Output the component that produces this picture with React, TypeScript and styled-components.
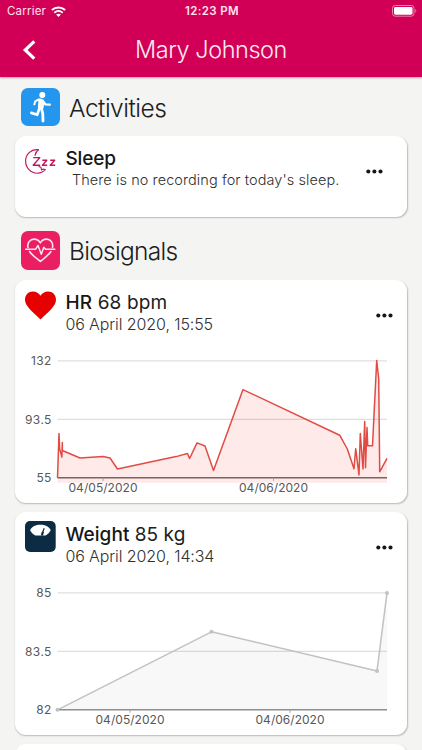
import React from "react";
import styled, { createGlobalStyle } from "styled-components";

const GlobalStyle = createGlobalStyle`
  * { box-sizing: border-box; }
  html, body { margin: 0; padding: 0; background: #f4f4f3; }
  body { font-family: Inter, "Liberation Sans", sans-serif; color: #202020; overflow: hidden; }
  svg { display: block; }
`;

const Screen = styled.div`
  display: flex;
  flex-direction: column;
  height: 750px;
  overflow: hidden;
  background: #f4f4f3;
`;

const Header = styled.header`
  display: flex;
  flex-direction: column;
  flex: none;
  height: 77px;
  background: #d10056;
  color: #fff;
  box-shadow: 0 1px 2px rgba(120, 60, 80, 0.45);
  z-index: 1;
`;

const StatusBar = styled.div`
  display: grid;
  grid-template-columns: 1fr auto 1fr;
  align-items: center;
  height: 22px;
  padding: 0 5px 0 7px;
  font-size: 11.5px;
  line-height: 22px;
  color: #ffe3ef;
`;

const Carrier = styled.div`
  display: flex;
  align-items: center;
  gap: 5px;
  letter-spacing: 0.2px;
`;

const Clock = styled.div`
  font-size: 11.5px;
  font-weight: 600;
  letter-spacing: 0.35px;
`;

const BatterySlot = styled.div`
  display: flex;
  justify-content: flex-end;
`;

const NavBar = styled.div`
  display: grid;
  grid-template-columns: 59px 1fr 59px;
  align-items: center;
  height: 55px;
`;

const BackButton = styled.button`
  display: flex;
  justify-content: center;
  padding: 0 2px 0 0;
  border: 0;
  background: none;
  color: #fff;
`;

const Title = styled.h1`
  margin: 0;
  text-align: center;
  font-size: 23.5px;
  font-weight: 300;
  line-height: 32px;
  letter-spacing: -0.45px;
  white-space: nowrap;
  color: #ffe9f2;
`;

const Content = styled.main`
  display: flex;
  flex-direction: column;
  padding: 1px 15px 0;
`;

const SectionHead = styled.div<{ $height: number }>`
  display: flex;
  align-items: center;
  gap: 9.5px;
  height: ${(p) => p.$height}px;
  padding-left: 6px;
`;

const SectionTile = styled.div<{ $color: string }>`
  display: flex;
  align-items: center;
  justify-content: center;
  width: 38.5px;
  height: 38.5px;
  border-radius: 7px;
  background: ${(p) => p.$color};
`;

const SectionTitle = styled.h2<{ $spacing: number }>`
  margin: 0;
  padding-top: 1px;
  font-size: 24.5px;
  font-weight: 300;
  line-height: 34px;
  letter-spacing: ${(p) => p.$spacing}px;
`;

const Card = styled.section<{ $height: number; $gap: number }>`
  display: flex;
  flex-direction: column;
  flex: none;
  height: ${(p) => p.$height}px;
  margin-bottom: ${(p) => p.$gap}px;
  border-radius: 11px;
  background: #fff;
  box-shadow: 0.5px 1px 1.5px rgba(0, 0, 0, 0.24);
`;

const CardHead = styled.div`
  display: flex;
  flex: none;
  height: 56px;
  padding-left: 9.6px;
`;

const IconSlot = styled.div<{ $top: number }>`
  flex: none;
  width: 40.8px;
  padding-top: ${(p) => p.$top}px;
`;

const Heading = styled.div`
  flex: 1;
  padding-top: 10px;
  white-space: nowrap;
`;

const Name = styled.div<{ $spacing: number }>`
  font-size: 19px;
  line-height: 25px;
  letter-spacing: ${(p) => p.$spacing}px;
`;

const Strong = styled.span`
  font-weight: 500;
  color: #161616;
`;

const Stamp = styled.div`
  font-size: 16px;
  font-weight: 300;
  line-height: 18px;
  letter-spacing: -0.1px;
  color: #303030;
`;

const Message = styled.div`
  padding-left: 6.5px;
  font-size: 14.5px;
  font-weight: 300;
  line-height: 18px;
  letter-spacing: 0.08px;
  color: #303030;
`;

const MoreButton = styled.button<{ $right: number }>`
  display: flex;
  align-items: center;
  align-self: flex-start;
  height: 70px;
  padding: 0;
  margin-right: ${(p) => p.$right}px;
  border: 0;
  background: none;
`;

const AxisText = styled.text`
  font-size: 12px;
  fill: #585858;
`;

const More = ({ right }: { right: number }) => (
  <MoreButton $right={right} aria-label="More">
    <svg width="17" height="5" viewBox="0 0 17 5" fill="#161616">
      <circle cx="2.3" cy="2.5" r="2.05" />
      <circle cx="8.4" cy="2.5" r="2.05" />
      <circle cx="14.5" cy="2.5" r="2.05" />
    </svg>
  </MoreButton>
);

const WifiIcon = () => (
  <svg width="15" height="11" viewBox="0 0 15 11" fill="none" stroke="#fff">
    <path d="M.9 4.1C4.7.6 10.3.6 14.1 4.1" strokeWidth="2" />
    <path d="M3.3 6.7C5.8 4.5 9.2 4.5 11.7 6.7" strokeWidth="1.8" />
    <path d="M7.5 11 5.1 8.6Q7.5 6.7 9.9 8.6Z" fill="#fff" stroke="none" />
  </svg>
);

const BatteryIcon = () => (
  <svg width="25" height="12" viewBox="0 0 25 12">
    <rect x=".5" y=".5" width="21.5" height="10.7" rx="2.7" fill="none" stroke="#ec83ad" />
    <rect x="2" y="2" width="18.5" height="7.7" rx="1.4" fill="#fff" />
    <path d="M23.3 4v3.7c1.3-.6 1.3-3.1 0-3.7z" fill="#ec83ad" />
  </svg>
);

const RunnerIcon = () => (
  <svg width="38.5" height="38.5" viewBox="0 0 38.5 38.5" fill="none" stroke="#fff" strokeLinecap="round" strokeLinejoin="round">
    <circle cx="21.3" cy="7" r="3" fill="#fff" stroke="none" />
    <path d="M16.6 11.4Q19 10.2 21.2 11.5Q23 13 22.5 15.5L22 20.5L17.4 20L17.9 14Z" fill="#fff" strokeWidth="1" />
    <path d="M17.4 11.6L14.2 13.4L13.3 16.4" strokeWidth="1.9" />
    <path d="M21.8 12.6L24.3 16.3L28.8 16.6" strokeWidth="2.3" />
    <path d="M18.6 20L16.2 26.8L10.4 24.9" strokeWidth="2.7" />
    <path d="M20.4 20.5L21.8 25.5L22 33" strokeWidth="2.8" />
  </svg>
);

const PulseIcon = () => (
  <svg width="38.5" height="38.5" viewBox="0 0 38.5 38.5" fill="none" stroke="#ffe3ee" strokeWidth="1.6" strokeLinecap="round" strokeLinejoin="round">
    <path d="M7 16.5C6 11.4 9.2 8.1 13 8.1C16 8.1 18 9.7 19.3 11.8C20.6 9.7 22.6 8.1 25.6 8.1C29.4 8.1 32.5 11.4 31.5 16.5M8.6 20.5C11.3 24.7 16 27.6 19.3 30.4C22.6 27.6 27.2 24.7 29.9 20.5" />
    <path d="M4.7 18.3H14.5L17 14.5L20.3 23.2L22.8 16.2L24.5 18.3H33.8" strokeWidth="1.5" />
  </svg>
);

const SleepIcon = () => (
  <svg width="32" height="26" viewBox="0 0 32 26" fill="none" stroke="#c3145b" strokeWidth="1.15" strokeLinejoin="round" strokeLinecap="round">
    <path d="M13.5.8C5.8-.3.6 5.5.6 12C.6 18.8 5.8 24.2 12.4 24.2C15.8 24.2 18.4 22.8 20.4 20.7L18.2 20.1L16.5 21L16.1 18.6L14 17.6" />
    <path d="M13.5.8C11.4 2.2 10.3 4.2 10 6.3" />
    <path d="M8.2 8.6H14.8L8.2 16.2H15.2" strokeWidth="1.4" strokeLinecap="butt" />
    <path d="M17.4 11.2H21.8L17.4 16.2H22.2M25.2 11.2H29.7L25.2 16.2H30.2" strokeWidth="1.4" strokeLinecap="butt" />
  </svg>
);

const HeartIcon = () => (
  <svg width="31" height="29" viewBox="0 0 31 29">
    <path d="M15.5 28.6C12 24.8 7.3 21 4.2 17.5C1.4 14.3 0 11.8 0 8.6C0 3.9 3.4.4 8 .4C11.2.4 14 2 15.5 4.7C17 2 19.8.4 23 .4C27.6.4 31 3.9 31 8.6C31 11.8 29.6 14.3 26.8 17.5C23.7 21 19 24.8 15.5 28.6Z" fill="#e60000" />
  </svg>
);

const ScaleIcon = () => (
  <svg width="31" height="31" viewBox="0 0 31 31">
    <rect width="30.7" height="31" rx="5" fill="#0c2c44" />
    <path d="M5.1 9.2C7 5.5 10.7 3.8 15.4 3.8S23.8 5.5 25.7 9.2C24.3 11.8 22.6 13.2 20.6 14.5H10.2C8.2 13.2 6.5 11.8 5.1 9.2Z" fill="#fff" />
    <path d="M16.7 13.8L19.2 7.2" stroke="#0c2c44" strokeWidth="1.2" />
    <path d="M16 14.6L17 10.4L19 11L18 14.6Z" fill="#0c2c44" />
  </svg>
);

type Point = [number, number];
type ChartProps = {
  points: Point[];
  yLabels: [string, string, string];
  ticks: { x: number; label: string }[];
  stroke: string;
  fill: string;
  axis: string;
  bleed: number;
  dots?: boolean;
};

const LEFT = 42.5;
const RIGHT = 372;
const ROWS = [24.9, 83.4, 141.8];

const LineChart = ({ points, yLabels, ticks, stroke, fill, axis, bleed, dots }: ChartProps) => {
  const line = points.map((p) => p.join(",")).join(" ");
  const base = ROWS[2] + bleed;
  return (
    <svg width="392" height="167" viewBox="0 0 392 167">
      <polygon points={`${LEFT},${base} ${line} ${RIGHT},${base}`} fill={fill} />
      {ROWS.slice(0, 2).map((y) => (
        <line key={y} x1={LEFT} x2={RIGHT} y1={y} y2={y} stroke="#000" strokeOpacity="0.13" strokeWidth="1.2" />
      ))}
      <polyline points={line} fill="none" stroke={stroke} strokeWidth="1.5" strokeLinejoin="round" />
      <line x1={LEFT} x2={RIGHT} y1={ROWS[2]} y2={ROWS[2]} stroke={axis} strokeWidth="1.4" />
      {dots && points.map(([x, y]) => <circle key={x} cx={x} cy={y} r="2" fill={stroke} />)}
      {yLabels.map((label, i) => (
        <AxisText key={label} x="36.8" y={ROWS[i] + 4.3} textAnchor="end" letterSpacing="0.4">
          {label}
        </AxisText>
      ))}
      {ticks.map(({ x, label }) => (
        <React.Fragment key={label}>
          <line x1={x} x2={x} y1={ROWS[2]} y2={ROWS[2] + 3} stroke="#a0a0a0" strokeWidth="1" />
          <AxisText x={x - 34.5} y="156.3" textLength="69">
            {label}
          </AxisText>
        </React.Fragment>
      ))}
    </svg>
  );
};

const heartRate: Point[] = [
  [42.5, 141.8], [44, 97.5], [44.7, 113], [46.9, 121], [47.3, 106.5], [47.4, 114.5],
  [65, 122], [88, 120.6], [95, 122], [102.5, 133], [161, 120.6], [172.5, 117.5],
  [174.6, 122.5], [182, 106.9], [190, 110], [198.5, 134.5], [228, 53.6], [324.7, 99.2],
  [332.3, 113], [339, 132.8], [340.7, 112.7], [344, 139], [345.3, 97.5], [348, 133],
  [349.7, 85.4], [350.5, 131.7], [352, 91.5], [352.7, 109.7], [357.5, 109.7],
  [361.7, 24.6], [363.7, 42.5], [364.7, 135.8], [372, 122.4],
];

const weight: Point[] = [[42.5, 141.8], [196.5, 63.8], [362, 102.9], [372, 24.9]];

export default function App() {
  return (
    <>
      <GlobalStyle />
      <Screen>
        <Header>
          <StatusBar>
            <Carrier>Carrier <WifiIcon /></Carrier>
            <Clock>12:23 PM</Clock>
            <BatterySlot><BatteryIcon /></BatterySlot>
          </StatusBar>
          <NavBar>
            <BackButton aria-label="Back">
              <svg width="14" height="20" viewBox="0 0 14 20" fill="none" stroke="#fff" strokeWidth="3.2">
                <path d="M12.3 1.3L3.2 10L12.3 18.7" />
              </svg>
            </BackButton>
            <Title>Mary Johnson</Title>
          </NavBar>
        </Header>
        <Content>
          <SectionHead $height={58}>
            <SectionTile $color="#2496ee"><RunnerIcon /></SectionTile>
            <SectionTitle $spacing={-0.5}>Activities</SectionTitle>
          </SectionHead>
          <Card $height={81} $gap={4}>
            <CardHead>
              <IconSlot $top={13}><SleepIcon /></IconSlot>
              <Heading>
                <Name $spacing={-0.1}><Strong>Sleep</Strong></Name>
                <Message>There is no recording for today's sleep.</Message>
              </Heading>
              <More right={24} />
            </CardHead>
          </Card>
          <SectionHead $height={59}>
            <SectionTile $color="#e91e63"><PulseIcon /></SectionTile>
            <SectionTitle $spacing={-0.7}>Biosignals</SectionTitle>
          </SectionHead>
          <Card $height={223} $gap={9}>
            <CardHead>
              <IconSlot $top={10.7}><HeartIcon /></IconSlot>
              <Heading>
                <Name $spacing={0.15}><Strong>HR</Strong> 68 bpm</Name>
                <Stamp>06 April 2020, 15:55</Stamp>
              </Heading>
              <More right={14} />
            </CardHead>
            <LineChart
              points={heartRate}
              yLabels={["132", "93.5", "55"]}
              ticks={[{ x: 88, label: "04/05/2020" }, { x: 258.5, label: "04/06/2020" }]}
              stroke="#e14b43"
              fill="#feeae9"
              axis="#7b6262"
              bleed={5}
            />
          </Card>
          <Card $height={223} $gap={9}>
            <CardHead>
              <IconSlot $top={9}><ScaleIcon /></IconSlot>
              <Heading>
                <Name $spacing={0.05}><Strong>Weight</Strong> 85 kg</Name>
                <Stamp>06 April 2020, 14:34</Stamp>
              </Heading>
              <More right={14} />
            </CardHead>
            <LineChart
              points={weight}
              yLabels={["85", "83.5", "82"]}
              ticks={[{ x: 115, label: "04/05/2020" }, { x: 275, label: "04/06/2020" }]}
              stroke="#c2c2c2"
              fill="#f8f8f8"
              axis="#8e8e8e"
              bleed={0}
              dots
            />
          </Card>
          <Card $height={223} $gap={0} />
        </Content>
      </Screen>
    </>
  );
}
